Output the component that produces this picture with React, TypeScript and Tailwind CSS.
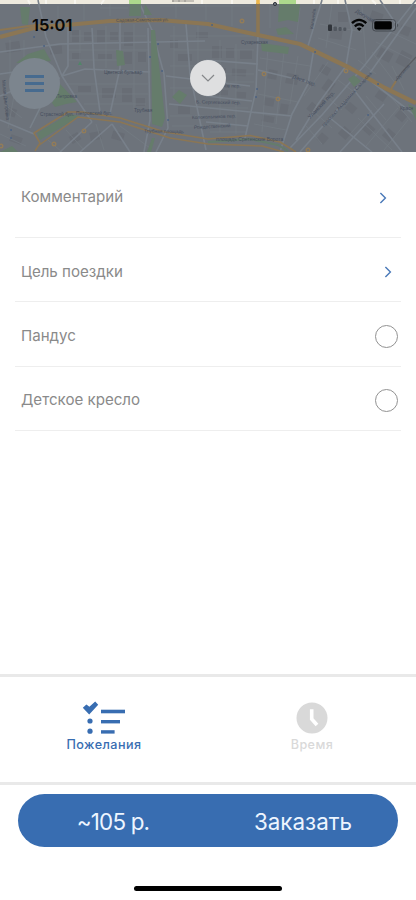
import React, { useState } from 'react'

type MapLabel = {
  text: string
  x: number
  y: number
  size?: number
  rotate?: number
}

const streets = [
  'M0 52 L60 44 L205 41',
  'M38 0 L46 37 L62 76 L76 98 L92 122',
  'M62 76 L85 69 L150 72',
  'M68 27 L68 66 L62 76',
  'M0 96 L24 86 L60 78',
  'M92 28 L94 68 L100 112',
  'M120 22 L120 68 L110 114',
  'M138 0 L152 30 L164 74 L168 128 L156 152',
  'M148 28 L150 120 L144 152',
  'M186 24 L190 74 L206 150',
  'M169 104 L250 112',
  'M166 76 L250 86',
  'M258 36 L256 90 L245 138',
  'M206 60 L258 64',
  'M206 96 L252 101',
  'M206 122 L248 126',
  'M314 48 L308 84 L292 114 L280 152',
  'M346 66 L318 104 L296 140',
  'M416 8 L372 70 L330 118 L300 152',
  'M416 0 L364 66 L322 115 L290 148',
  'M258 70 L308 82',
  'M250 112 L292 116',
  'M372 82 L416 116',
  'M330 118 L372 152',
  'M354 90 L402 152',
  'M384 104 L340 152',
  'M322 0 L308 46',
  'M345 0 L352 30 L346 66',
  'M380 0 L396 24',
  'M0 120 L34 134',
  'M60 152 L92 122',
  'M80 152 L112 124',
  'M112 124 L130 152',
  'M0 74 L28 70 L44 100 L30 128',
]

const lanes = [
  'M10 40V94 M24 40V72 M80 30V66 M106 26V68 M134 24V110 M174 26V100 M198 26V92',
  'M70 36H146 M68 50H148 M68 60H118 M66 84H148 M74 94H148 M84 104H146',
  'M170 36H254 M174 50H254 M170 66H206 M170 88H204 M170 116H204 M172 126H206',
  'M220 40V132 M236 44V134 M208 74H254 M208 82H254 M210 108H248 M210 132H246',
  'M268 48L262 132 M284 52L276 124 M298 56L290 104 M260 58L310 66 M258 94L298 102 M254 124L286 130',
  'M270 4V28 M300 8L296 40 M332 4L326 48 M362 6L366 62 M320 24L362 32 M318 38L356 50',
  'M328 62L304 96 M338 80L354 92 M326 96L342 110 M314 112L332 128 M306 126L322 144',
  'M366 96L386 120 M372 110L350 134 M398 108L366 146 M408 120L384 150 M390 96L412 122 M358 118L392 150',
  'M376 42L416 62 M386 30L416 44 M392 66L404 90 M372 52L396 84 M358 60L376 74',
  'M4 104L22 118 M14 96L8 128 M0 134L26 146 M48 140L62 152 M66 130L84 150 M96 124L104 150 M120 126L150 148',
  'M100 8H128 M160 6H252 M176 4V18 M206 4V20 M232 6V26 M58 6V22 M84 4V20 M110 4V16',
]

const blocks: [number, number, number, number, number][] = [
  [6, 42, 14, 10, -8], [50, 46, 12, 8, -4], [72, 30, 7, 12, 0], [84, 32, 8, 9, 0],
  [97, 30, 8, 14, 0], [110, 32, 8, 8, 0], [124, 32, 9, 14, 0], [72, 53, 9, 6, 0],
  [98, 54, 14, 5, 0], [124, 52, 8, 12, 0], [138, 52, 8, 10, 0], [78, 86, 13, 6, 0],
  [102, 88, 14, 10, 0], [122, 88, 10, 14, 0], [136, 98, 9, 8, 0], [170, 40, 8, 8, 0],
  [178, 54, 14, 7, 0], [196, 32, 12, 6, 0], [212, 46, 10, 12, 0], [226, 48, 8, 10, 0],
  [240, 50, 12, 9, 0], [214, 68, 12, 5, 0], [232, 69, 14, 7, 4], [214, 90, 14, 5, 3],
  [236, 92, 10, 6, 3], [268, 70, 9, 9, 10], [286, 74, 12, 10, 10], [264, 98, 10, 8, 10],
  [280, 104, 8, 10, 10], [262, 116, 12, 6, 10], [320, 66, 10, 8, 30], [324, 80, 9, 12, 35],
  [308, 104, 10, 9, 40], [330, 30, 12, 9, 8], [338, 12, 10, 10, 0], [370, 12, 12, 12, 20],
  [378, 50, 14, 10, 28], [398, 52, 12, 14, 28], [400, 26, 10, 9, 20], [346, 104, 10, 8, 40],
  [362, 124, 12, 9, 42], [384, 130, 10, 10, 42], [396, 112, 10, 8, 42], [340, 128, 10, 10, 42],
  [376, 92, 10, 8, 34], [318, 134, 9, 9, 40], [6, 108, 10, 8, 20], [10, 136, 12, 7, 20],
  [70, 134, 10, 8, -30], [90, 132, 11, 8, -10], [112, 132, 12, 8, 16], [178, 106, 12, 8, 0],
]

const labels: MapLabel[] = [
  { text: 'Садовая-Самотёчная ул.', x: 116, y: 22, size: 4.5, rotate: -1 },
  { text: 'Цветной бульвар', x: 104, y: 73.5 },
  { text: 'Трубная', x: 134, y: 112 },
  { text: 'Страстной бул.', x: 40, y: 115.5 },
  { text: 'Петровский бул.', x: 76, y: 115 },
  { text: 'Трубная площадь', x: 144, y: 132.5, rotate: 1 },
  { text: 'Сухаревская', x: 241, y: 43.5, size: 4.5 },
  { text: 'Печатников пер.', x: 204, y: 87, rotate: 1 },
  { text: 'Б. Сергиевский пер.', x: 196, y: 103.5, rotate: 1 },
  { text: 'Колокольников пер.', x: 192, y: 119, rotate: -2 },
  { text: 'Рождественский', x: 194, y: 129, rotate: -3 },
  { text: 'площадь Сретенские Ворота', x: 216, y: 141, size: 5 },
  { text: 'Даев пер.', x: 292, y: 78, rotate: 20, size: 5.5 },
  { text: 'Уланский пер.', x: 310, y: 119, rotate: -46, size: 5.5 },
  { text: 'проспект Академика Сахарова', x: 324, y: 127, rotate: -48, size: 5 },
  { text: 'Докучаев', x: 355, y: 12, rotate: 31, size: 5.5 },
  { text: 'Каланчёв.', x: 313, y: 29, rotate: -82, size: 4.5 },
  { text: 'Красн', x: 400, y: 110, size: 4.8 },
  { text: 'Орликов', x: 398, y: 80, rotate: -49, size: 4.6 },
  { text: 'Малая Дмитровка', x: 2, y: 80, rotate: 84 },
  { text: 'Петровка', x: 56, y: 98 },
]

const pois: [number, number][] = [
  [242, 21], [346, 71], [264, 74], [278, 99], [84, 131], [54, 144], [1, 146], [308, 150],
]

const stops: [number, number][] = [
  [34, 37], [44, 46], [150, 57], [162, 71], [158, 44], [168, 120], [257, 89], [256, 97],
  [315, 52], [378, 84], [368, 115], [11, 130], [11, 138], [212, 25],
]

function CityMap() {
  return (
    <svg width="416" height="152" viewBox="0 0 416 152" className="block" aria-hidden="true">
      <rect width="416" height="152" fill="#eeeade" />
      <rect y="4" width="416" height="148" fill="#6d737b" />

      <g fill="#686d75">
        {blocks.map(([x, y, w, h, r], i) => (
          <rect key={i} x={x} y={y} width={w} height={h} transform={`rotate(${r} ${x + w / 2} ${y + h / 2})`} />
        ))}
      </g>
      <g fill="none" stroke="#747b83" strokeWidth="0.8">
        {lanes.map((d) => (
          <path key={d} d={d} />
        ))}
      </g>
      <g fill="none" stroke="#78808a" strokeWidth="1.6" strokeLinejoin="round">
        {streets.map((d) => (
          <path key={d} d={d} />
        ))}
      </g>

      {/* parks and boulevards */}
      <g fill="#657c6b">
        <path d="M20 7H30L28 25L22 24Z" />
        <path d="M16 63L28 54L44 49L51 61L36 62Z" />
        <path d="M151 30L155 30L165 118L162 127L152 124Z" />
        <path d="M60 84L77 102L66 104L55 107L52 103Z" />
        <path d="M37 133L69 114L80 116L40 140Z" />
        <path d="M116 50L123 51L125 65L117 66Z" />
        <path d="M172 97L179 90L187 95L180 104Z" />
        <path d="M130 4H141V16H129Z" />
        <path d="M145 4L152 15L144 15Z" />
        <path d="M279 4H300L298 22L288 20L278 22Z" />
        <path d="M261 43L289 47L288 54L262 51Z" />
        <path d="M276 29L286 27L294 34L278 35Z" />
        <path d="M348 79L354 75L361 81L354 87Z" />
        <path d="M408 104L416 108V120Z" />
        <path d="M152 138L155 138L151 152H147Z" />
        <path d="M0 152L12 146L18 152Z" />
      </g>
      <g fill="#acd98c">
        <path d="M129 0H141V4H129Z" />
        <path d="M279 0H296V4H279Z" />
      </g>

      {/* highways */}
      <g fill="none" stroke="#8b7654" strokeLinejoin="round">
        <path d="M0 37L34 28L110 21L160 20L208 24L258 35L300 44L350 68L385 88L416 103" strokeWidth="4.2" />
        <path d="M0 30L36 25L66 25" strokeWidth="1.8" />
        <path d="M258 3V35" strokeWidth="3.6" />
        <path d="M391 89L396 81" strokeWidth="2" />
        <path d="M35 151L40 143L34 133L68 112L82 112L120 118L165 132L208 139L250 135.500L280 142L296 152" strokeWidth="1.5" />
        <path d="M38 146L78 117L120 122L170 138L208 144L262 146L284 152" strokeWidth="1.5" />
      </g>
      <path d="M396 81L402 72L416 57" fill="none" stroke="#5b5d61" strokeWidth="1.2" />
      <path d="M208 142L250 139L278 145L288 151" fill="none" stroke="#657c6b" strokeWidth="2" />
      <path d="M258 0V4" stroke="#efb64a" strokeWidth="3.6" />
      <path d="M28 0L30 4M46 0V4M75 0V4M104 0L101 4M202 0V4M232 0V4M314 0V4M338 0V4M372 0L376 4M400 0V4" stroke="#f8f6ef" strokeWidth="2" />

      <g fill="none" stroke="#927c59" strokeWidth="1.4">
        {pois.map(([x, y]) => (
          <circle key={`${x}-${y}`} cx={x} cy={y} r="1.8" />
        ))}
      </g>
      <g fill="#4d6382">
        {stops.map(([x, y]) => (
          <rect key={`${x}-${y}`} x={x - 0.7} y={y - 1} width="1.5" height="2" />
        ))}
      </g>
      <circle cx="275" cy="4" r="1.6" fill="#6d737b" stroke="#333840" />
      <path d="M78 65L80 61L82 65Z" fill="#518568" />

      <g fill="#464e5e" fontFamily="'Liberation Sans', sans-serif">
        {labels.map(({ text, x, y, size = 4.8, rotate = 0 }) => (
          <text key={text} x={x} y={y} fontSize={size} transform={`rotate(${rotate} ${x} ${y})`}>
            {text}
          </text>
        ))}
      </g>
      <path d="M172 1H194M173 0V2M179 0V2M185 0V2" fill="none" stroke="#85847f" strokeWidth="0.8" />
    </svg>
  )
}

function StatusIcons() {
  return (
    <svg width="74" height="16" viewBox="0 0 74 16" aria-label="status">
      <rect x="1" y="7.500" width="4" height="6.500" rx="1" fill="#30343a" />
      <g fill="#50565e">
        <rect x="6.500" y="9.500" width="3.500" height="4.500" rx="1" />
        <rect x="11.500" y="10" width="3.200" height="4" rx="1" />
        <rect x="16.300" y="10.500" width="3" height="3.500" rx="1" />
      </g>
      <g fill="none" stroke="#050505" strokeWidth="2.300">
        <path d="M25 6.200Q32 -0.500 39.300 6.200" />
        <path d="M27.800 9.300Q32.200 5.300 36.600 9.300" />
      </g>
      <path d="M29.800 11.400Q32.200 9.500 34.600 11.400L32.200 14Z" fill="#050505" />
      <rect x="45.500" y="2.500" width="23" height="11.500" rx="3" fill="none" stroke="#454a51" />
      <rect x="47.300" y="4.200" width="17.500" height="8.200" rx="1.600" fill="#020202" />
      <path d="M70.200 6.300Q72.200 8.200 70.200 10.200Z" fill="#454a51" />
    </svg>
  )
}

function Chevron() {
  return (
    <svg width="8" height="12" viewBox="0 0 8 12" fill="none" stroke="#4979b8" strokeWidth="1.4">
      <path d="M1.400 1L6.400 6L1.400 11" />
    </svg>
  )
}

function ChecklistIcon() {
  return (
    <svg width="42" height="32" viewBox="0 0 42 32" fill="#386db1" className="overflow-visible">
      <path d="M-0.200 5.800L3.400 2.500L6.400 4.700L12.200 -0.600L15.200 2.700L6.200 12.400Z" />
      <circle cx="7" cy="19" r="2.600" />
      <circle cx="7" cy="29.200" r="2.600" />
      <rect x="18" y="7.700" width="24" height="3.600" />
      <rect x="18" y="18" width="19" height="3.400" />
      <rect x="18" y="28.200" width="13.600" height="3.400" />
    </svg>
  )
}

function ClockIcon() {
  return (
    <svg width="32" height="32" viewBox="0 0 32 32">
      <circle cx="16" cy="16" r="15.500" fill="#d9d9d9" />
      <path d="M15.700 7.300V17L21 23" fill="none" stroke="#fff" strokeWidth="3.600" />
    </svg>
  )
}

export default function App() {
  const [ramp, setRamp] = useState(false)
  const [childSeat, setChildSeat] = useState(false)

  const options = [
    { name: 'Пандус', checked: ramp, toggle: () => setRamp(!ramp) },
    { name: 'Детское кресло', checked: childSeat, toggle: () => setChildSeat(!childSeat) },
  ]

  return (
    <div className="relative flex h-[900px] w-[416px] flex-col overflow-hidden bg-white font-['Inter','Liberation_Sans',sans-serif]">
      <header className="relative h-[152px] shrink-0">
        <CityMap />
        <span className="absolute left-[32px] top-[15px] text-[16.5px] font-semibold leading-5 text-[#08090a]">
          15:01
        </span>
        <div className="absolute left-[327px] top-[17px]">
          <StatusIcons />
        </div>
        <button
          aria-label="Меню"
          className="absolute left-[9px] top-[58px] flex size-[51px] flex-col items-center justify-center gap-[4.6px] rounded-full bg-[#7c858e]"
        >
          <span className="h-[2.6px] w-[19px] bg-[#476b8f]" />
          <span className="h-[2.6px] w-[19px] bg-[#476b8f]" />
          <span className="h-[2.6px] w-[19px] bg-[#476b8f]" />
        </button>
        <button
          aria-label="Свернуть"
          className="absolute left-[190px] top-[60px] flex size-9 items-center justify-center rounded-full bg-[#dedfe0]"
        >
          <svg width="14" height="8" viewBox="0 0 14 8" fill="none" stroke="#85878a" strokeWidth="1.2">
            <path d="M1 1L7 7L13 1" />
          </svg>
        </button>
      </header>

      <main className="flex-1 px-[15px] text-[15.1px] text-[#8a8a8a]">
        <button className="flex h-[86px] w-full items-center justify-between border-b border-[#eeeeee] pl-[6px] pr-[14px] pt-[6px] text-left">
          <span>Комментарий</span>
          <Chevron />
        </button>
        <button className="flex h-16 w-full items-center justify-between border-b border-[#eeeeee] pl-[6px] pr-[9px] pt-[5px] text-left">
          <span>Цель поездки</span>
          <Chevron />
        </button>
        {options.map(({ name, checked, toggle }) => (
          <button
            key={name}
            onClick={toggle}
            className="flex h-[64.5px] w-full items-center justify-between border-b border-[#eeeeee] pl-[6px] pr-[3px] pt-[5px] text-left"
          >
            <span>{name}</span>
            <span
              className={`size-[23px] rounded-full border-[1.5px] border-[#929292] ${checked ? 'bg-[#386db1]' : ''}`}
            />
          </button>
        ))}
      </main>

      <nav className="flex h-[111px] shrink-0 border-y-[3px] border-[#e9e9e9] text-[12.6px] font-medium leading-4 tracking-[0.45px]">
        <button className="flex flex-1 flex-col items-center pt-[25px] text-[#386db1]">
          <ChecklistIcon />
          <span className="mt-[3px]">Пожелания</span>
        </button>
        <button className="flex flex-1 flex-col items-center pt-[25px] text-[#d9d9d9]">
          <ClockIcon />
          <span className="mt-[3px]">Время</span>
        </button>
      </nav>

      <footer className="flex h-[115px] shrink-0 flex-col items-center pt-[9px]">
        <button className="flex h-[53px] w-[380px] items-center rounded-full bg-[#386db1] pt-[2px] text-[22.4px] text-[#edf5ff]">
          <span className="flex-1 tracking-[-0.8px]">~105 р.</span>
          <span className="flex-1">Заказать</span>
        </button>
        <div className="mt-[39px] h-[5px] w-[148px] rounded-full bg-black" />
      </footer>
    </div>
  )
}
